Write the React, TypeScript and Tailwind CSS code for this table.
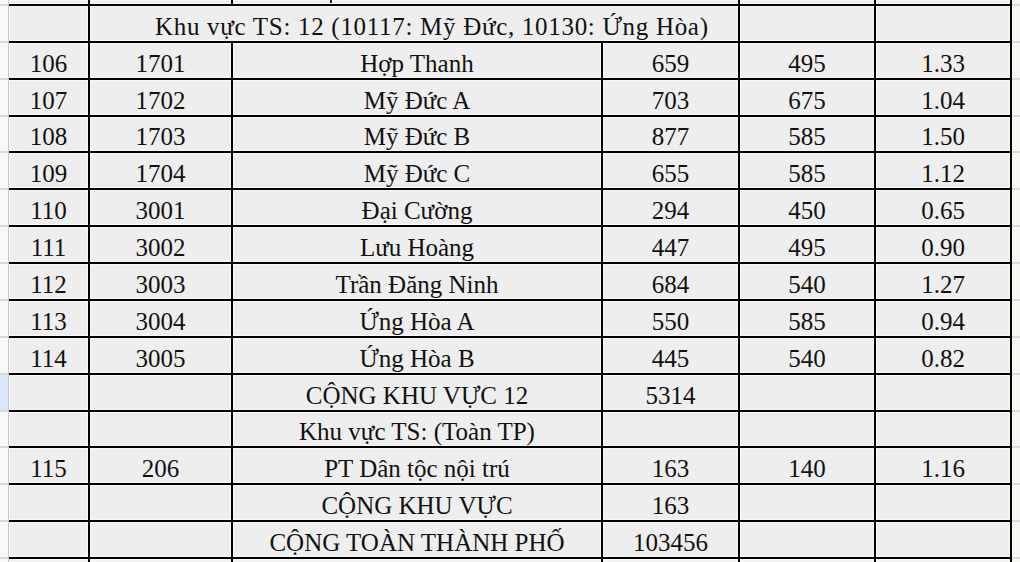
import React from 'react';

type Row = {
  stt?: string;
  code?: string;
  name: string;
  a?: string;
  b?: string;
  ratio?: string;
  merged?: boolean;
};

const rows: Row[] = [
  { name: 'Khu vực TS: 12 (10117: Mỹ Đức, 10130: Ứng Hòa)', merged: true },
  { stt: '106', code: '1701', name: 'Hợp Thanh', a: '659', b: '495', ratio: '1.33' },
  { stt: '107', code: '1702', name: 'Mỹ Đức A', a: '703', b: '675', ratio: '1.04' },
  { stt: '108', code: '1703', name: 'Mỹ Đức B', a: '877', b: '585', ratio: '1.50' },
  { stt: '109', code: '1704', name: 'Mỹ Đức C', a: '655', b: '585', ratio: '1.12' },
  { stt: '110', code: '3001', name: 'Đại Cường', a: '294', b: '450', ratio: '0.65' },
  { stt: '111', code: '3002', name: 'Lưu Hoàng', a: '447', b: '495', ratio: '0.90' },
  { stt: '112', code: '3003', name: 'Trần Đăng Ninh', a: '684', b: '540', ratio: '1.27' },
  { stt: '113', code: '3004', name: 'Ứng Hòa A', a: '550', b: '585', ratio: '0.94' },
  { stt: '114', code: '3005', name: 'Ứng Hòa B', a: '445', b: '540', ratio: '0.82' },
  { name: 'CỘNG KHU VỰC 12', a: '5314' },
  { name: 'Khu vực TS: (Toàn TP)' },
  { stt: '115', code: '206', name: 'PT Dân tộc nội trú', a: '163', b: '140', ratio: '1.16' },
  { name: 'CỘNG KHU VỰC', a: '163' },
  { name: 'CỘNG TOÀN THÀNH PHỐ', a: '103456' },
];

const rowsTemplate =
  'grid-rows-[4px_35px_35px_35px_34px_35px_35px_35px_35px_35px_35px_35px_34px_35px_35px_35px_3px]';

function Cell({ children, className = '' }: { children?: React.ReactNode; className?: string }) {
  return (
    <div
      className={`flex items-end justify-center overflow-hidden whitespace-nowrap bg-[#eeeeee] leading-[28px] shadow-[inset_0_0_0_1px_#f8f8f8] ${className}`}
    >
      {children}
    </div>
  );
}

export default function App() {
  return (
    <div
      className="flex h-[562px] w-[1020px] overflow-hidden bg-white text-[25px] text-[#111]"
      style={{ fontFamily: '"Liberation Serif", "Times New Roman", serif' }}
    >
      {/* row header strip */}
      <div className={`grid w-[9px] gap-y-[2px] border-r border-[#c9c9c9] bg-[#d9d9d9] ${rowsTemplate}`}>
        {Array.from({ length: 17 }).map((_, i) => (
          <div key={i} className={i === 11 ? 'bg-[#dbe5fb]' : 'bg-[#f8f8f8]'} />
        ))}
      </div>

      {/* sheet */}
      <div
        className={`grid grid-cols-[79px_141px_368px_135px_134px_134px] gap-[2px] bg-black pr-[2px] ${rowsTemplate}`}
      >
        {/* partial row at top */}
        <Cell />
        <Cell />
        <Cell className="col-span-2 !items-start !justify-start">
          <span className="ml-[97px] block h-[3px] w-[2px] bg-[#222]" />
        </Cell>
        <Cell />
        <Cell />

        {rows.map((r, i) =>
          r.merged ? (
            <React.Fragment key={i}>
              <Cell />
              <Cell className="col-span-3 !justify-start pl-[65px] tracking-[0.7px]">{r.name}</Cell>
              <Cell />
              <Cell />
            </React.Fragment>
          ) : (
            <React.Fragment key={i}>
              <Cell>{r.stt}</Cell>
              <Cell>{r.code}</Cell>
              <Cell>{r.name}</Cell>
              <Cell>{r.a}</Cell>
              <Cell>{r.b}</Cell>
              <Cell>{r.ratio}</Cell>
            </React.Fragment>
          )
        )}

        {/* partial row at bottom */}
        <Cell />
        <Cell />
        <Cell />
        <Cell />
        <Cell />
        <Cell />
      </div>

      {/* right strip */}
      <div className={`grid w-[8px] gap-y-[2px] bg-[#dcdcdc] ${rowsTemplate}`}>
        {Array.from({ length: 17 }).map((_, i) => (
          <div key={i} className="bg-[#f7f7f3]" />
        ))}
      </div>
    </div>
  );
}
